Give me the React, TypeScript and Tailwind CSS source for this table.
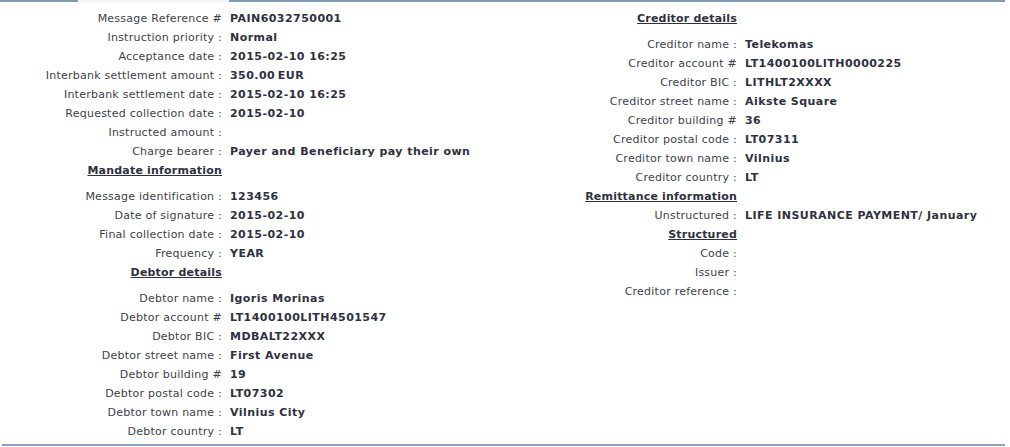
import React from "react";

type Item =
  | { kind: "row"; label: string; value?: string }
  | { kind: "head"; text: string; gap?: boolean };

const left: Item[] = [
  { kind: "row", label: "Message Reference #", value: "PAIN6032750001" },
  { kind: "row", label: "Instruction priority :", value: "Normal" },
  { kind: "row", label: "Acceptance date :", value: "2015-02-10 16:25" },
  { kind: "row", label: "Interbank settlement amount :", value: "350.00\u2009EUR" },
  { kind: "row", label: "Interbank settlement date :", value: "2015-02-10 16:25" },
  { kind: "row", label: "Requested collection date :", value: "2015-02-10" },
  { kind: "row", label: "Instructed amount :", value: "" },
  { kind: "row", label: "Charge bearer :", value: "Payer and Beneficiary pay their own" },
  { kind: "head", text: "Mandate information", gap: true },
  { kind: "row", label: "Message identification :", value: "123456" },
  { kind: "row", label: "Date of signature :", value: "2015-02-10" },
  { kind: "row", label: "Final collection date :", value: "2015-02-10" },
  { kind: "row", label: "Frequency :", value: "YEAR" },
  { kind: "head", text: "Debtor details", gap: true },
  { kind: "row", label: "Debtor name :", value: "Igoris Morinas" },
  { kind: "row", label: "Debtor account #", value: "LT1400100LITH4501547" },
  { kind: "row", label: "Debtor BIC :", value: "MDBALT22XXX" },
  { kind: "row", label: "Debtor street name :", value: "First Avenue" },
  { kind: "row", label: "Debtor building #", value: "19" },
  { kind: "row", label: "Debtor postal code :", value: "LT07302" },
  { kind: "row", label: "Debtor town name :", value: "Vilnius City" },
  { kind: "row", label: "Debtor country :", value: "LT" },
];

const right: Item[] = [
  { kind: "head", text: "Creditor details", gap: true },
  { kind: "row", label: "Creditor name :", value: "Telekomas" },
  { kind: "row", label: "Creditor account #", value: "LT1400100LITH0000225" },
  { kind: "row", label: "Creditor BIC :", value: "LITHLT2XXXX" },
  { kind: "row", label: "Creditor street name :", value: "Aikste Square" },
  { kind: "row", label: "Creditor building #", value: "36" },
  { kind: "row", label: "Creditor postal code :", value: "LT07311" },
  { kind: "row", label: "Creditor town name :", value: "Vilnius" },
  { kind: "row", label: "Creditor country :", value: "LT" },
  { kind: "head", text: "Remittance information" },
  { kind: "row", label: "Unstructured :", value: "LIFE INSURANCE PAYMENT/ January" },
  { kind: "head", text: "Structured" },
  { kind: "row", label: "Code :", value: "" },
  { kind: "row", label: "Issuer :", value: "" },
  { kind: "row", label: "Creditor reference :", value: "" },
];

function Column({ items, width }: { items: Item[]; width: string }) {
  return (
    <div className={`flex flex-col ${width}`}>
      {items.map((it, i) =>
        it.kind === "row" ? (
          <div key={i} className="flex h-[19px] items-center">
            <div className="w-[222px] shrink-0 text-right text-[#40414a] tracking-[0.24px] whitespace-nowrap">
              {it.label}
            </div>
            <div className="pl-[8px] font-bold text-[#2e3140] tracking-[0.45px] whitespace-nowrap">
              {it.value}
            </div>
          </div>
        ) : (
          <div
            key={i}
            className={`flex h-[19px] items-center ${it.gap ? "mb-[7px]" : ""}`}
          >
            <div className="w-[222px] shrink-0 text-right font-bold underline text-[#2e3140] tracking-[0.2px] whitespace-nowrap">
              {it.text}
            </div>
          </div>
        )
      )}
    </div>
  );
}

export default function App() {
  return (
    <div
      className="w-[1010px] h-[447px] bg-white text-[11px] leading-[19px]"
      style={{ fontFamily: '"DejaVu Sans", Verdana, sans-serif' }}
    >
      <div className="flex h-[2px] w-[1005px]">
        <div className="w-[78px] bg-[#7d9bb5]" />
        <div className="w-[151px] bg-[#f4f3ff]" />
        <div className="flex-1 bg-[#7d9bb5]" />
      </div>
      <div className="flex pt-[7px] h-[442px]">
        <Column items={left} width="w-[515px]" />
        <Column items={right} width="flex-1" />
      </div>
      <div className="ml-[2px] w-[1003px] h-[2px] bg-[#8fa3b8]" />
    </div>
  );
}
